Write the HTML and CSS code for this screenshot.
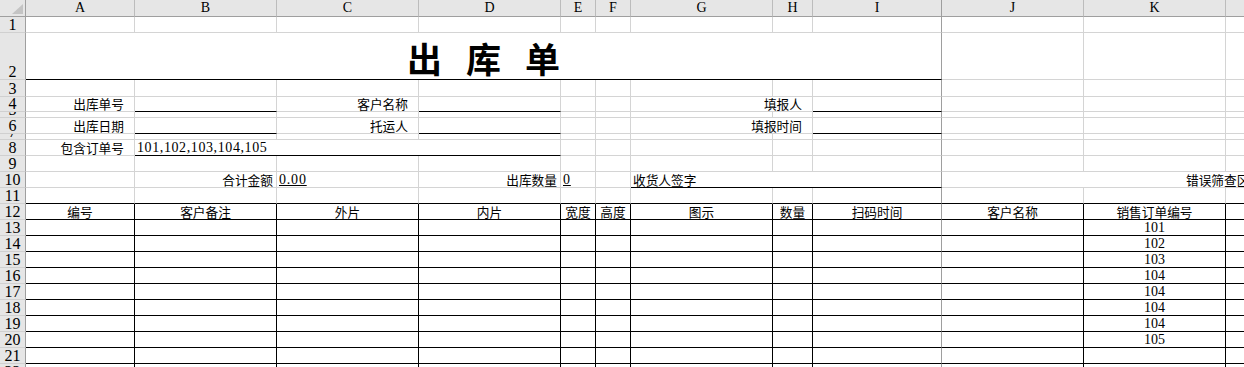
FILE: index.html
```html
<!DOCTYPE html>
<html lang="zh">
  <head>
    <meta charset="UTF-8" />
    <meta name="viewport" content="width=device-width, initial-scale=1.0" />
    <title>出库单</title>
    <link rel="stylesheet" href="styles.css">
  </head>
  <body>
    <div id="sheet" class="sheet">
      <div class="corner">
        <svg width="11" height="10" viewBox="0 0 11 10"><polygon points="11,0 11,10 0,10" fill="#c4c4c4" /></svg>
      </div>
    </div>
    <script>
      const sheet = document.querySelector("#sheet");
      const letters = ["A", "B", "C", "D", "E", "F", "G", "H", "I", "J", "K", "L"];

      letters.forEach(function (l, i) {
        let h = document.createElement("div");
        h.className = i == 8 ? "ch fz" : "ch";
        h.textContent = l;
        sheet.appendChild(h);
      });

      // [text, class, span]
      const rows = {
        2: [["出 库 单", "title bb", 9]],
        4: [["出库单号", "lbl"], ["", "bb"], ["客户名称", "lbl"], ["", "bb"], [""], [""], ["填报人", "lbl", 2], ["", "bb"]],
        6: [["出库日期", "lbl"], ["", "bb"], ["托运人", "lbl"], ["", "bb"], [""], [""], ["填报时间", "lbl", 2], ["", "bb"]],
        8: [["包含订单号", "lbl"], ["101,102,103,104,105", "bb num ids", 3]],
        10: [[""], ["合计金额", "lbl2"], ["0.00", "num u"], ["出库数量", "lbl2"], ["0", "num u"], [""], ["收货人签字", "bb", 3], ["错误筛查区", "err", 3]],
        12: [["编号"], ["客户备注"], ["外片"], ["内片"], ["宽度"], ["高度"], ["图示"], ["数量"], ["扫码时间"], ["客户名称"], ["销售订单编号"], [""]]
      };
      const orders = ["101", "102", "103", "104", "104", "104", "104", "105"];

      function addRow(n, cells, extra) {
        let rh = document.createElement("div");
        rh.className = "rh";
        rh.textContent = n;
        sheet.appendChild(rh);
        let col = 0;
        cells = (cells || []).slice();
        while (col < 12) {
          let c = cells.shift() || [""];
          let span = c[2] || 1;
          let el = document.createElement("div");
          el.className = "c " + (c[1] || "") + " " + (extra || "");
          if (span > 1) el.className += " s" + span;
          if (col + span - 1 == 8) el.className += " fz";
          el.textContent = c[0];
          sheet.appendChild(el);
          col += span;
        }
      }

      for (let r = 1; r <= 22; r++) {
        if (r == 11) {
          addRow(r, [], "bb");
        } else if (r == 12) {
          addRow(r, rows[12], "bb br ctr");
        } else if (r > 12 && r < 22) {
          let cells = [[""], [""], [""], [""], [""], [""], [""], [""], [""], [""], [orders[r - 13] || "", "num"], [""]];
          addRow(r, cells, "bb br ctr");
        } else if (r == 22) {
          addRow(r, [], "br");
        } else {
          addRow(r, rows[r]);
        }
      }
    </script>
  </body>
</html>
```

FILE: styles.css
```css
* {
  padding: 0;
  margin: 0;
  box-sizing: border-box;
}
html,
body {
  overflow: hidden;
  background: #fff;
}
body {
  font-family: "Noto Sans CJK SC", sans-serif;
  font-size: 12.7px;
  color: #000;
}
.sheet {
  display: grid;
  grid-template-columns: 26px 109px 142px 142px 142px 35px 35px 142px 40px 129px 142px 142px 142px;
  grid-template-rows: 17px 16px 47px 17px 15px 6px 16px 6px 16px 16px 16px 16px repeat(11, 16px);
  width: max-content;
}
.corner {
  display: flex;
  justify-content: flex-end;
  align-items: flex-end;
  padding: 0 2px 2px 0;
  background: #e6e6e6;
  border-right: 1px solid #9f9f9f;
  border-bottom: 1px solid #9f9f9f;
}
.corner svg {
  display: block;
}
.ch {
  display: flex;
  justify-content: center;
  align-items: center;
  background: #e6e6e6;
  border-right: 1px solid #bcbcbc;
  border-bottom: 1px solid #9f9f9f;
  font-family: "Liberation Serif", serif;
  font-size: 14px;
}
.ch.fz {
  border-right-color: #9e9e9e;
}
.rh {
  display: flex;
  justify-content: center;
  align-items: flex-end;
  overflow: hidden;
  background: #e6e6e6;
  border-right: 1px solid #9f9f9f;
  border-bottom: 1px solid #d0d0d0;
  font-family: "Liberation Serif", serif;
  font-size: 16px;
  line-height: 15px;
}
.c {
  display: flex;
  align-items: flex-end;
  padding: 0 2px;
  white-space: nowrap;
  line-height: 14px;
  border-right: 1px solid #d4d4d4;
  border-bottom: 1px solid #d4d4d4;
}
.s2 {
  grid-column: span 2;
}
.s3 {
  grid-column: span 3;
}
.s9 {
  grid-column: span 9;
}
.bb {
  border-bottom-color: #000;
}
.br {
  border-right-color: #000;
}
.c.fz {
  border-right-color: #9e9e9e;
}
.ctr {
  justify-content: center;
}
.lbl {
  justify-content: flex-end;
  padding-right: 10px;
}
.lbl2 {
  justify-content: flex-end;
  padding-right: 3px;
}
.num {
  font-family: "Liberation Serif", serif;
  font-size: 14px;
}
.ids {
  letter-spacing: 0.6px;
}
.u {
  text-decoration: underline;
  letter-spacing: 0.8px;
}
.err {
  padding-left: 244px;
  overflow: visible;
}
.title {
  justify-content: center;
  font-size: 35px;
  font-weight: 700;
  line-height: 35px;
  word-spacing: 16px;
  padding-bottom: 4px;
}
```
